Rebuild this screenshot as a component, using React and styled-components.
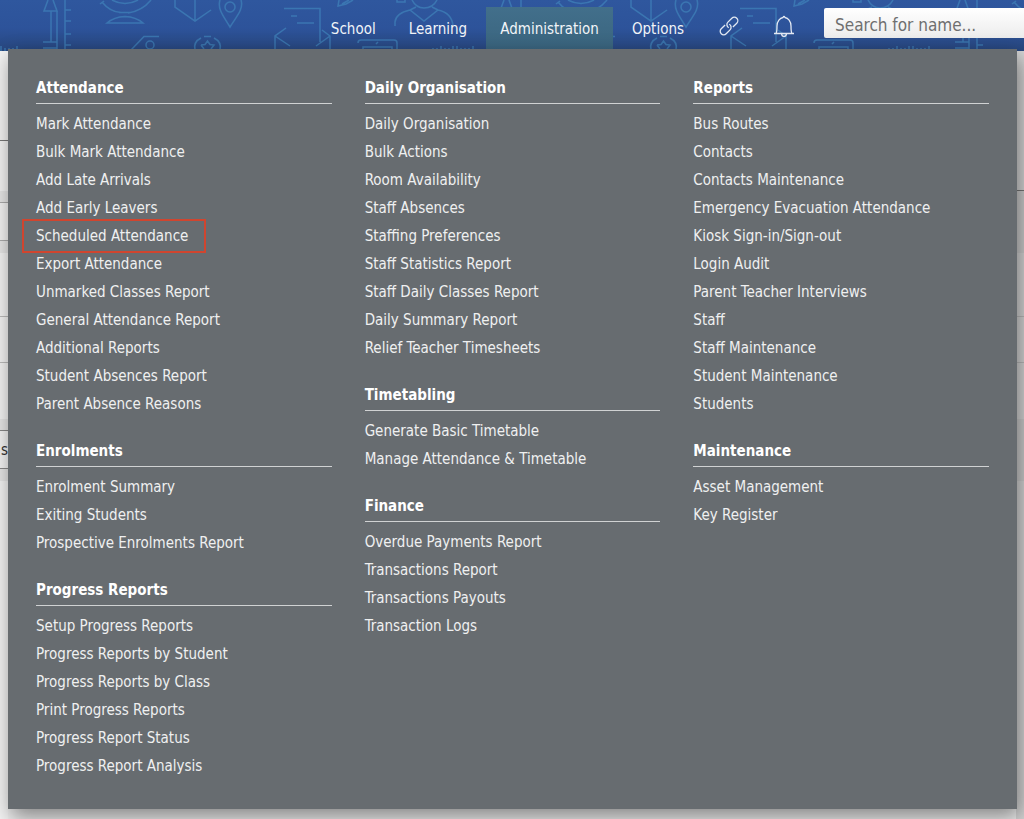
import React from "react";
import styled, { createGlobalStyle } from "styled-components";

const GlobalStyle = createGlobalStyle`
  * { box-sizing: border-box; }
  body {
    margin: 0;
    background: #efefef;
    font-family: Tahoma, "DejaVu Sans Condensed", "Noto Sans", sans-serif;
    overflow: hidden;
  }
`;

const Page = styled.div`
  position: relative;
  min-height: 100vh;
  display: flex;
  flex-direction: column;
`;

const Header = styled.header`
  position: relative;
  height: 51px;
  background: linear-gradient(#2f579e 0%, #2d539a 55%, #28477f 100%);
`;

const Artwork = styled.svg`
  display: block;
  width: 100%;
  height: 100%;
`;

const Bar = styled.div`
  position: absolute;
  inset: 0;
  display: flex;
  justify-content: flex-end;
  align-items: flex-start;
`;

const Nav = styled.nav`
  display: flex;
  gap: 5px;
  padding-top: 7px;
  margin-right: 3px;
`;

const NavLink = styled.a`
  height: 43px;
  padding: 0 14px;
  line-height: 45px;
  font-size: 15px;
  color: #f1f4f8;
  text-decoration: none;
  background: ${(p) => (p.$active ? "linear-gradient(#426f8b, #3a657f)" : "transparent")};
`;

const IconButton = styled.button`
  width: 55px;
  height: 51px;
  padding: 0;
  border: 0;
  background: none;
  color: #e3e9f3;
  display: grid;
  place-items: center;
`;

const Search = styled.input`
  width: 200px;
  height: 30px;
  margin: 8px 0 0 13px;
  padding: 3px 11px 0;
  border: 0;
  border-radius: 2px 0 0 2px;
  background: linear-gradient(#ffffff, #ececec);
  font-family: inherit;
  font-size: 17px;
  color: #444;
  &::placeholder { color: #6f6f6f; opacity: 1; }
`;

const Backdrop = styled.main`
  flex: 1;
  display: flex;
  justify-content: space-between;
`;

const Strip = styled.div`
  width: 8px;
  --plain: ${(p) => (p.$dim ? "#d6d6d6" : "#f3f3f3")};
  --shade: ${(p) => (p.$dim ? "#cdcdcd" : "#e6e6e6")};
  background: var(--plain);
`;

const Band = styled.div`
  height: ${(p) => p.$h}px;
  background: ${(p) => (p.$shade ? "var(--shade)" : "var(--plain)")};
  border-bottom: ${(p) => (p.$line ? `1px solid ${p.$line}` : "0")};
  display: flex;
  align-items: center;
  justify-content: flex-end;
  overflow: hidden;
  font-size: 15px;
  color: #333;
`;

const Menu = styled.section`
  position: absolute;
  top: 49px;
  left: 8px;
  right: 7px;
  min-height: 760px;
  padding: 25px 28px 28px;
  display: grid;
  grid-template-columns: repeat(3, 1fr);
  gap: 33px;
  align-items: start;
  background: #676c70;
  box-shadow: 3px 8px 20px rgba(0, 0, 0, 0.45);
`;

const Column = styled.div`
  display: flex;
  flex-direction: column;
  gap: 19px;
`;

const Heading = styled.h2`
  margin: 0 0 6px;
  height: 30px;
  line-height: 28px;
  border-bottom: 1px solid #d0d2d3;
  font-size: 15px;
  font-weight: 700;
  color: #fff;
`;

const List = styled.ul`
  margin: 0;
  padding: 0;
  list-style: none;
`;

const Item = styled.li`
  display: flex;
  height: 28px;
`;

const ItemLink = styled.a`
  line-height: 28px;
  font-size: 15px;
  color: #eff0f0;
  text-decoration: none;
  white-space: nowrap;
  ${(p) =>
    p.$marked &&
    `
    margin: -3px -14px;
    padding: 0 16px 0 12px;
    height: 34px;
    line-height: 30px;
    border: 2px solid #d0452f;
  `}
`;

const columns = [
  [
    ["Attendance", ["Mark Attendance", "Bulk Mark Attendance", "Add Late Arrivals", "Add Early Leavers", "Scheduled Attendance", "Export Attendance", "Unmarked Classes Report", "General Attendance Report", "Additional Reports", "Student Absences Report", "Parent Absence Reasons"]],
    ["Enrolments", ["Enrolment Summary", "Exiting Students", "Prospective Enrolments Report"]],
    ["Progress Reports", ["Setup Progress Reports", "Progress Reports by Student", "Progress Reports by Class", "Print Progress Reports", "Progress Report Status", "Progress Report Analysis"]],
  ],
  [
    ["Daily Organisation", ["Daily Organisation", "Bulk Actions", "Room Availability", "Staff Absences", "Staffing Preferences", "Staff Statistics Report", "Staff Daily Classes Report", "Daily Summary Report", "Relief Teacher Timesheets"]],
    ["Timetabling", ["Generate Basic Timetable", "Manage Attendance & Timetable"]],
    ["Finance", ["Overdue Payments Report", "Transactions Report", "Transactions Payouts", "Transaction Logs"]],
  ],
  [
    ["Reports", ["Bus Routes", "Contacts", "Contacts Maintenance", "Emergency Evacuation Attendance", "Kiosk Sign-in/Sign-out", "Login Audit", "Parent Teacher Interviews", "Staff", "Staff Maintenance", "Student Maintenance", "Students"]],
    ["Maintenance", ["Asset Management", "Key Register"]],
  ],
];

const HeaderArt = () => (
  <Artwork aria-hidden="true">
    <defs>
      <pattern id="school" width="456" height="51" patternUnits="userSpaceOnUse">
        <g fill="none" stroke="#4088bd" strokeWidth="1.5" strokeOpacity="0.65">
          <path d="M48 0L44 11H57L53 0M51 11V42M57 11V49M43 42H57M43 48H57" />
          <path d="M65 0V51M65 10H71M65 21H71M65 34H71M65 45H71" />
          <path d="M1 46V51M5 48V51M9 48V51M13 48V51M17 46V51" />
          <path d="M433 48V51M437 48V51M441 46V51M445 48V51M449 48V51M453 46V51" />
          <path d="M100 4L104 1M102 2Q110 12 121 12.500M128 13Q142 11 151 0M112 0Q125 7 138 0M119 12.500H131" />
          <path d="M107 23H143Q136 17 125 16.500Q114 17 107 23Z" />
          <path d="M175 0V7L195 21L211 10M195 0V21" />
          <circle cx="230" cy="7" r="5" />
          <path d="M220 0C217 9 224 17 230 27C236 17 244 9 241 0" />
          <path d="M131 50L144 36.500H159" />
          <circle cx="150" cy="45" r="4" />
          <path d="M195 50Q193 42 201 38M204 36.500H211M214 38Q222 42 220 50M201 45L205 44.500L207.500 41L210 44.500L214 45L211 49M201 45L204 49" />
          <path d="M284 8.500H320V42M291 16H297M297 23H314M275 50V36L286 28M275 36L290 46M330 50V36L322 30M330 36L316 46" />
          <path d="M339 0L338 6L346 4L353 0M342 4L349 0" />
          <path d="M397 0V2H405V0M412 0Q416 8 424 8Q433 8 437 0M395 26V22Q396 13 410 10L424 21L438 10Q452 13 453 26M410 10L416 7M438 10L432 7" />
          <path d="M358 43Q358 40 361 40H394Q397 40 397 43V51M363 51V47H392V51M376 44L378 42" />
        </g>
      </pattern>
    </defs>
    <rect width="100%" height="51" fill="url(#school)" />
  </Artwork>
);

const LinkIcon = () => (
  <svg width="20" height="20" viewBox="0 0 20 20" fill="none" stroke="currentColor" strokeWidth="1.3">
    <g transform="rotate(-45 10 10)">
      <path d="M8 6.500H2.500A3.500 3.500 0 0 0 2.500 13.500H8A3.500 3.500 0 0 0 11.400 9" />
      <path d="M12 13.500H17.500A3.500 3.500 0 0 0 17.500 6.500H12A3.500 3.500 0 0 0 8.600 11" />
    </g>
  </svg>
);

const BellIcon = () => (
  <svg width="22" height="22" viewBox="0 0 22 22" fill="none" stroke="currentColor" strokeWidth="1.3">
    <path d="M1 18.500H21M3 18.500C4 17 4 15 4 11C4 6 7 3 10 2.500Q11 0.500 12 2.500C15 3 18 6 18 11C18 15 18 17 19 18.500M8.500 19Q9 21.500 11 21.500T13.500 19" />
  </svg>
);

export default function App() {
  return (
    <Page>
      <GlobalStyle />
      <Header>
        <HeaderArt />
        <Bar>
          <Nav>
            <NavLink href="#school">School</NavLink>
            <NavLink href="#learning">Learning</NavLink>
            <NavLink href="#administration" $active>Administration</NavLink>
            <NavLink href="#options">Options</NavLink>
          </Nav>
          <IconButton aria-label="Links"><LinkIcon /></IconButton>
          <IconButton aria-label="Notifications"><BellIcon /></IconButton>
          <Search type="search" aria-label="Search for name" placeholder="Search for name..." />
        </Bar>
      </Header>
      <Backdrop>
        <Strip>
          <Band $h={90} $line="#777" />
          <Band $h={50} />
          <Band $h={12} $line="#aaa" $shade />
          <Band $h={38} $line="#aaa" />
          <Band $h={12} $shade />
          <Band $h={64} $line="#bbb" />
          <Band $h={46} $line="#bbb" />
          <Band $h={56} />
          <Band $h={12} $line="#888" $shade />
          <Band $h={38} $line="#888">s</Band>
          <Band $h={12} $shade />
        </Strip>
        <Strip $dim>
          <Band $h={140} $line="#777" />
          <Band $h={62} $shade />
          <Band $h={64} $line="#bbb" />
          <Band $h={46} $line="#bbb" />
          <Band $h={56} />
          <Band $h={62} $shade />
        </Strip>
      </Backdrop>
      <Menu aria-label="Administration">
        {columns.map((sections, i) => (
          <Column key={i}>
            {sections.map(([title, items]) => (
              <div key={title}>
                <Heading>{title}</Heading>
                <List>
                  {items.map((label) => (
                    <Item key={label}>
                      <ItemLink href="#menu" $marked={label === "Scheduled Attendance"}>{label}</ItemLink>
                    </Item>
                  ))}
                </List>
              </div>
            ))}
          </Column>
        ))}
      </Menu>
    </Page>
  );
}
